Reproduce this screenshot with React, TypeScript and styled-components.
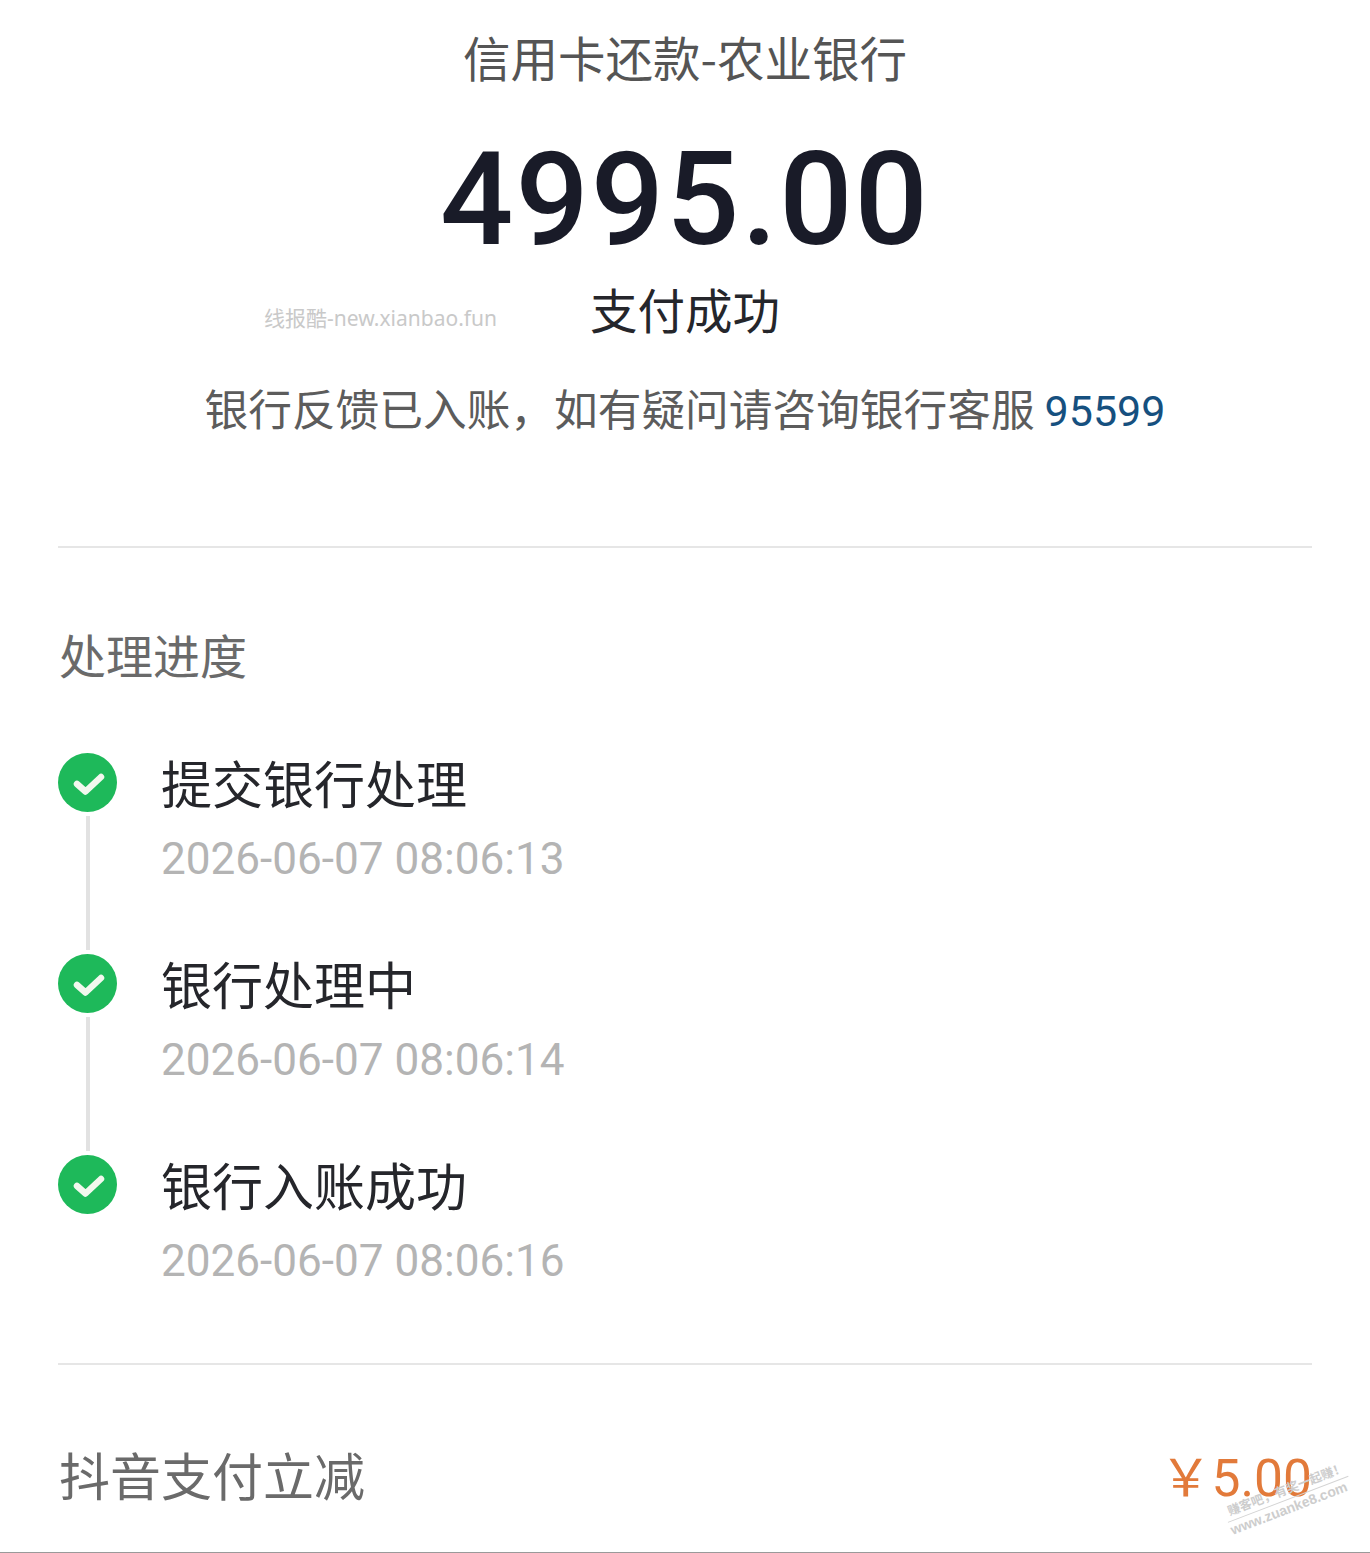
import React from "react";
import styled, { createGlobalStyle } from "styled-components";

const CJK = `"Noto Sans CJK SC", "Noto Sans", sans-serif`;
const DIGITS = `Roboto, "Noto Sans CJK SC", sans-serif`;

const Global = createGlobalStyle`
  html, body { margin: 0; padding: 0; background: #fff; }
  * { box-sizing: border-box; }
`;

const Page = styled.div`
  position: relative;
  width: 1370px;
  height: 1553px;
  overflow: hidden;
  background: #fff;
  font-family: ${CJK};
  border-bottom: 1px solid #9a9a9a;
`;

const Summary = styled.header`
  display: flex;
  flex-direction: column;
  align-items: center;
  padding-top: 27px;
`;

const Title = styled.h1`
  margin: 0;
  font-size: 47.5px;
  font-weight: 400;
  line-height: 60px;
  color: #555;
`;

const Amount = styled.div`
  margin-top: 38px;
  font-family: ${DIGITS};
  font-size: 129px;
  font-weight: 500;
  line-height: 150px;
  letter-spacing: 2px;
  color: #191b28;
`;

const Status = styled.div`
  margin-top: 4px;
  font-size: 47.5px;
  line-height: 60px;
  color: #25262b;
`;

const Note = styled.p`
  margin: 38px 0 0;
  font-size: 43.7px;
  line-height: 60px;
  color: #5c5c5c;
`;

const Phone = styled.span`
  margin-left: 10px;
  font-family: ${DIGITS};
  font-size: 43px;
  color: #16507f;
`;

const Divider = styled.hr`
  margin: 0 58px;
  border: 0;
  height: 2px;
  background: #e6e6e6;
`;

const SummaryRule = styled(Divider)`
  margin-top: 105px;
`;

const Progress = styled.section`
  padding: 76px 58px 73px;
`;

const Heading = styled.h2`
  margin: 0 0 0 1px;
  font-size: 47px;
  font-weight: 400;
  line-height: 60px;
  color: #6a6a6a;
`;

const Steps = styled.ol`
  margin: 69px 0 0;
  padding: 0;
  list-style: none;
`;

const Step = styled.li<{ $last?: boolean }>`
  display: grid;
  grid-template-columns: 59px 1fr;
  column-gap: 44px;
  height: ${(p) => (p.$last ? "135px" : "201px")};
`;

const Rail = styled.div`
  display: flex;
  flex-direction: column;
  align-items: center;
`;

const Badge = styled.svg`
  flex: none;
  width: 59px;
  height: 59px;
  display: block;
`;

const Connector = styled.div`
  flex: 1;
  width: 4px;
  margin: 4px 0 4px;
  background: #e2e2e2;
`;

const StepName = styled.div`
  font-size: 51px;
  line-height: 58px;
  color: #25262b;
`;

const StepTime = styled.div`
  margin-top: 18px;
  font-family: ${DIGITS};
  font-size: 44.1px;
  line-height: 60px;
  color: #b4b4b4;
`;

const Promo = styled.div`
  display: flex;
  justify-content: space-between;
  align-items: center;
  height: 60px;
  margin: 79px 58px 0 59px;
`;

const PromoLabel = styled.div`
  font-size: 51px;
  line-height: 60px;
  color: #6a6a6a;
`;

const PromoValue = styled.div`
  margin-top: 10px;
  font-family: ${DIGITS};
  font-size: 51.5px;
  line-height: 60px;
  color: #e27a3a;
`;

const SiteMark = styled.div`
  position: absolute;
  left: 264px;
  top: 304px;
  font-family: "Noto Sans", "Noto Sans CJK SC", sans-serif;
  font-size: 21px;
  line-height: 28px;
  color: #c9c9c9;
  white-space: nowrap;
`;

const Stamp = styled.div`
  position: absolute;
  left: 1222px;
  top: 1507px;
  transform: rotate(-21deg);
  transform-origin: left top;
  font-family: "Liberation Sans", "Noto Sans CJK SC", sans-serif;
  color: #cdcdcd;
  white-space: nowrap;
`;

const StampTop = styled.div`
  font-size: 12.5px;
  font-weight: 700;
  line-height: 15px;
  padding: 0 0 1px 4px;
  border-bottom: 1px solid #d4d4d4;
`;

const StampBottom = styled.div`
  font-size: 14px;
  font-weight: 700;
  line-height: 17px;
`;

const Check = () => (
  <Badge viewBox="0 0 59 59" aria-hidden="true">
    <circle cx="29.5" cy="29.5" r="29.5" fill="#1eb95a" />
    <path
      d="M19 31 L27.5 38.5 L43 24"
      fill="none"
      stroke="#f2f8ee"
      strokeWidth="6.5"
      strokeLinecap="round"
      strokeLinejoin="round"
    />
  </Badge>
);

const items = [
  { name: "提交银行处理", time: "2026-06-07 08:06:13" },
  { name: "银行处理中", time: "2026-06-07 08:06:14" },
  { name: "银行入账成功", time: "2026-06-07 08:06:16" },
];

export default function App() {
  return (
    <Page>
      <Global />
      <Summary>
        <Title>信用卡还款-农业银行</Title>
        <Amount>4995.00</Amount>
        <Status>支付成功</Status>
        <Note>
          银行反馈已入账，如有疑问请咨询银行客服<Phone>95599</Phone>
        </Note>
      </Summary>
      <SummaryRule />
      <Progress>
        <Heading>处理进度</Heading>
        <Steps>
          {items.map((item, i) => {
            const last = i === items.length - 1;
            return (
              <Step key={item.time} $last={last}>
                <Rail>
                  <Check />
                  {!last && <Connector />}
                </Rail>
                <div>
                  <StepName>{item.name}</StepName>
                  <StepTime>{item.time}</StepTime>
                </div>
              </Step>
            );
          })}
        </Steps>
      </Progress>
      <Divider />
      <Promo>
        <PromoLabel>抖音支付立减</PromoLabel>
        <PromoValue>￥5.00</PromoValue>
      </Promo>
      <SiteMark>线报酷-new.xianbao.fun</SiteMark>
      <Stamp>
        <StampTop>赚客吧，有奖一起赚！</StampTop>
        <StampBottom>www.zuanke8.com</StampBottom>
      </Stamp>
    </Page>
  );
}
